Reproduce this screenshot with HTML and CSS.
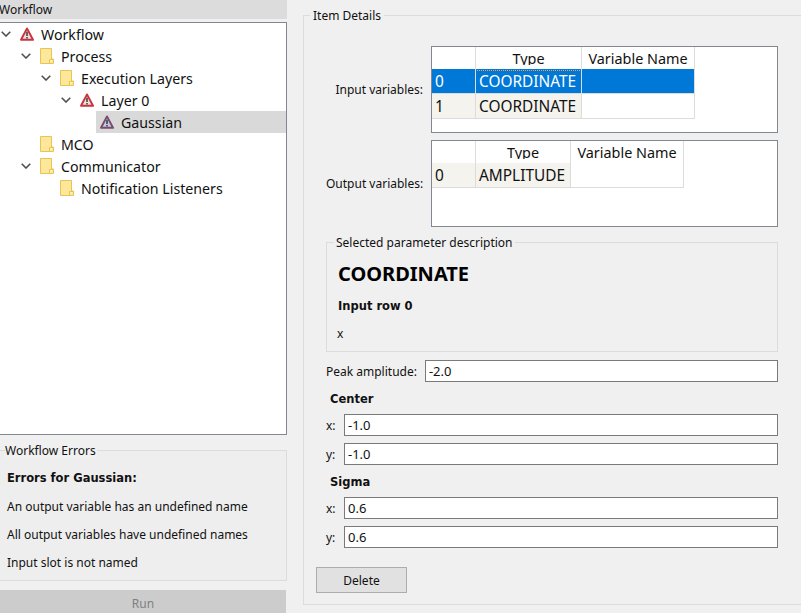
FILE: index.html
```html
<!DOCTYPE html>
<html lang="en">
<head>
  <meta charset="UTF-8">
  <title>Workflow</title>
  <link rel="stylesheet" href="styles.css">
</head>
<body>
  <svg class="defs" width="0" height="0">
    <symbol id="chevron" viewBox="0 0 10 6">
      <path d="M0.7 0.7 L5 5 L9.3 0.7" fill="none" stroke="#505050" stroke-width="1.6"/>
    </symbol>
    <symbol id="folder" viewBox="0 0 14 16">
      <path d="M0.5 0.5 H11.5 V11 H13.5 V15.5 H0.5 Z" fill="#fde79a" stroke="#e8c552"/>
      <path d="M9.5 15.5 V11.5 H13" fill="#fff3c4" stroke="#e8c552"/>
    </symbol>
    <symbol id="warn" viewBox="0 0 14 14">
      <path d="M7 1.4 L13 12.8 H1 Z" fill="#e6e0e0" stroke="#cb333b" stroke-width="1.9" stroke-linejoin="round"/>
      <path d="M7 4.8 V9" stroke="#5a4a4a" stroke-width="1.7"/>
      <path d="M7 9.9 V11.5" stroke="#5a4a4a" stroke-width="1.7"/>
    </symbol>
    <symbol id="warn-selected" viewBox="0 0 14 14">
      <path d="M7 1.4 L13 12.8 H1 Z" fill="#bccbe0" stroke="#7f4a68" stroke-width="1.9" stroke-linejoin="round"/>
      <path d="M7 4.8 V9" stroke="#3f4a66" stroke-width="1.7"/>
      <path d="M7 9.9 V11.5" stroke="#3f4a66" stroke-width="1.7"/>
    </symbol>
  </svg>

  <div class="app">
    <div class="left">
      <div class="pane-title"><span>Workflow</span></div>

      <div class="tree">
        <div class="row depth-0">
          <svg class="toggle"><use href="#chevron"/></svg>
          <div class="item"><svg class="icon-warn"><use href="#warn"/></svg>Workflow</div>
        </div>
        <div class="row depth-1">
          <svg class="toggle"><use href="#chevron"/></svg>
          <div class="item"><svg class="icon-folder"><use href="#folder"/></svg>Process</div>
        </div>
        <div class="row depth-2">
          <svg class="toggle"><use href="#chevron"/></svg>
          <div class="item"><svg class="icon-folder"><use href="#folder"/></svg>Execution Layers</div>
        </div>
        <div class="row depth-3">
          <svg class="toggle"><use href="#chevron"/></svg>
          <div class="item"><svg class="icon-warn"><use href="#warn"/></svg>Layer 0</div>
        </div>
        <div class="row depth-4">
          <span class="toggle"></span>
          <div class="item selected"><svg class="icon-warn"><use href="#warn-selected"/></svg>Gaussian</div>
        </div>
        <div class="row depth-1">
          <span class="toggle"></span>
          <div class="item"><svg class="icon-folder"><use href="#folder"/></svg>MCO</div>
        </div>
        <div class="row depth-1">
          <svg class="toggle"><use href="#chevron"/></svg>
          <div class="item"><svg class="icon-folder"><use href="#folder"/></svg>Communicator</div>
        </div>
        <div class="row depth-2">
          <span class="toggle"></span>
          <div class="item"><svg class="icon-folder"><use href="#folder"/></svg>Notification Listeners</div>
        </div>
      </div>

      <fieldset class="errors">
        <legend>Workflow Errors</legend>
        <p class="strong">Errors for Gaussian:</p>
        <p>An output variable has an undefined name</p>
        <p>All output variables have undefined names</p>
        <p>Input slot is not named</p>
      </fieldset>

      <button class="run" disabled>Run</button>
    </div>

    <fieldset class="details">
      <legend>Item Details</legend>

      <div class="var-row">
        <label class="var-label">Input variables:</label>
        <div class="table-box">
          <table class="vars vars-input">
            <thead>
              <tr><th class="col-idx"></th><th class="col-type"><div>Type</div></th><th class="col-name"><div>Variable Name</div></th></tr>
            </thead>
            <tbody>
              <tr class="current"><td class="idx">0</td><td class="focus"><div>COORDINATE</div></td><td></td></tr>
              <tr><td class="idx">1</td><td class="tinted">COORDINATE</td><td></td></tr>
            </tbody>
          </table>
        </div>
      </div>

      <div class="var-row">
        <label class="var-label">Output variables:</label>
        <div class="table-box">
          <table class="vars vars-output">
            <thead>
              <tr><th class="col-idx"></th><th class="col-type"><div>Type</div></th><th class="col-name"><div>Variable Name</div></th></tr>
            </thead>
            <tbody>
              <tr><td class="idx">0</td><td class="tinted">AMPLITUDE</td><td></td></tr>
            </tbody>
          </table>
        </div>
      </div>

      <fieldset class="description">
        <legend>Selected parameter description</legend>
        <h2>COORDINATE</h2>
        <h3>Input row 0</h3>
        <p>x</p>
      </fieldset>

      <div class="field peak">
        <label>Peak amplitude:</label>
        <input type="text" value="-2.0">
      </div>

      <div class="group-title">Center</div>
      <div class="field">
        <label>x:</label>
        <input type="text" value="-1.0">
      </div>
      <div class="field">
        <label>y:</label>
        <input type="text" value="-1.0">
      </div>

      <div class="group-title">Sigma</div>
      <div class="field">
        <label>x:</label>
        <input type="text" value="0.6">
      </div>
      <div class="field">
        <label>y:</label>
        <input type="text" value="0.6">
      </div>

      <button class="delete">Delete</button>
    </fieldset>
  </div>
</body>
</html>
```

FILE: styles.css
```css
html, body {
  margin: 0;
  height: 100%;
  overflow: hidden;
}
body {
  background-color: #f0f0f0;
  color: #111;
  font-family: "Noto Sans", sans-serif;
  font-size: 12px;
}
.defs {
  display: block;
  height: 0;
}
.app {
  display: flex;
  height: 613px;
  overflow: hidden;
}

/* left column */
.left {
  width: 286px;
  flex: none;
  display: flex;
  flex-direction: column;
}
.pane-title {
  height: 19px;
  flex: none;
  line-height: 19px;
  background-color: #dcdcdc;
  margin: 0 -1px 3px 0;
  overflow: hidden;
}
.pane-title span {
  margin-left: -1px;
  display: block;
}
.tree {
  height: 411px;
  flex: none;
  margin-right: -1px;
  background-color: #fff;
  border: 1px solid #828790;
  border-left: none;
  font-size: 14.2px;
}
.row {
  display: flex;
  align-items: center;
  height: 22px;
}
.depth-1 { padding-left: 20px; }
.depth-2 { padding-left: 40px; }
.depth-3 { padding-left: 60px; }
.depth-4 { padding-left: 80px; }
.toggle {
  width: 12px;
  height: 6px;
  margin-right: 4px;
  flex: none;
}
.item {
  flex: 1;
  height: 22px;
  display: flex;
  align-items: center;
  gap: 7px;
  padding-left: 4px;
}
.selected {
  background-color: #d9d9d9;
}
.icon-warn {
  width: 14px;
  height: 14px;
  flex: none;
}
.icon-folder {
  width: 14px;
  height: 16px;
  flex: none;
}
.errors {
  margin: 7px 0 0;
  padding: 11px 0 0 7px;
  height: 139px;
  width: 287px;
  flex: none;
  box-sizing: border-box;
  border: 1px solid #dcdcdc;
  border-left: none;
  background-color: #eeeeee;
  min-width: 0;
}
.errors legend {
  padding: 0 1px 0 0;
  margin-left: -2px;
  background-color: #f0f0f0;
}
.errors p {
  margin: 0 0 11px;
  line-height: 17px;
}
.strong, .group-title, .description h3 {
  font-family: "DejaVu Sans", sans-serif;
  font-size: 11.5px;
  font-weight: bold;
}
.run {
  margin: 9px 0 0;
  height: 27px;
  flex: none;
  border: none;
  padding: 0;
  background-color: #cccccc;
  color: #808080;
  font: inherit;
}

/* right column */
.details {
  margin: 7px -10px 0 17px;
  padding: 22px 32px 0 23px;
  flex: 1;
  min-width: 0;
  height: 598px;
  box-sizing: border-box;
  border: 1px solid #dcdcdc;
}
.details legend {
  padding: 0 3px;
  margin-left: -17px;
}
.var-row {
  display: flex;
  align-items: center;
  margin-bottom: 7px;
}
.var-label {
  width: 105px;
  padding-right: 8px;
  box-sizing: border-box;
  text-align: right;
  white-space: nowrap;
  flex: none;
  margin-left: -1px;
}
.table-box {
  flex: 1;
  height: 87px;
  box-sizing: border-box;
  background-color: #fff;
  border: 1px solid #828790;
  overflow: hidden;
}
.vars {
  border-collapse: collapse;
  table-layout: fixed;
}
.vars th {
  font-weight: normal;
  font-size: 14.4px;
  height: 22px;
  padding: 0;
  border-right: 1px solid #dcdcdc;
}
.vars th div {
  height: 18px;
  margin-bottom: 4px;
  line-height: 23px;
  overflow: hidden;
}
.vars td {
  height: 23px;
  padding: 1px 3px 0;
  font-size: 15.4px;
  border-right: 1px solid #dcdcdc;
  border-bottom: 1px solid #dcdcdc;
  white-space: nowrap;
  overflow: hidden;
}
.col-idx { width: 43px; }
.vars-input { width: 263px; }
.vars-input .col-type { width: 105px; }
.vars-input .col-name { width: 112px; }
.vars-output { width: 252px; }
.vars-output .col-type { width: 94px; }
.vars-output .col-name { width: 112px; }
.idx, .tinted {
  background-color: #f4f3ee;
}
.current td {
  background-color: #0078d7;
  color: #fff;
  border-bottom-color: #dcdcdc;
}
.focus div {
  outline: 1px dotted #f0a050;
  margin: 0 -3px;
  padding: 0 3px;
  line-height: 22px;
}

.description {
  margin: 7px 0 0 -1px;
  padding: 11px 11px 0 10px;
  height: 118px;
  box-sizing: border-box;
  border: 1px solid #dcdcdc;
  min-width: 0;
}
.description legend {
  padding: 0 2px;
  margin-left: -3px;
}
.description h2 {
  margin: 0 0 0 1px;
  font-size: 20px;
  line-height: 24px;
  font-weight: bold;
  color: #000;
}
.description h3 {
  margin: 12px 0 0 1px;
  line-height: 17px;
}
.description p {
  margin: 10px 0 0;
  line-height: 17px;
}
.field {
  display: flex;
  align-items: center;
  gap: 7px;
  height: 22px;
  margin: 7px 0 0 -1px;
}
.field label {
  width: 11px;
  flex: none;
}
.field input {
  flex: 1;
  min-width: 0;
  height: 22px;
  box-sizing: border-box;
  border: 1px solid #7a7a7a;
  padding: 0 3px;
  background-color: #fff;
  color: #111;
  font-family: inherit;
  font-size: 13px;
  outline: none;
}
.peak {
  margin-top: 8px;
  gap: 8px;
}
.peak label {
  width: auto;
}
.group-title {
  margin: 8px 0 0 3px;
  line-height: 18px;
}
.group-title + .field {
  margin-top: 6px;
}
.delete {
  display: block;
  width: 91px;
  height: 26px;
  margin: 19px 0 0 -11px;
  background-color: #e1e1e1;
  border: 1px solid #adadad;
  color: #111;
  font: inherit;
}
```
